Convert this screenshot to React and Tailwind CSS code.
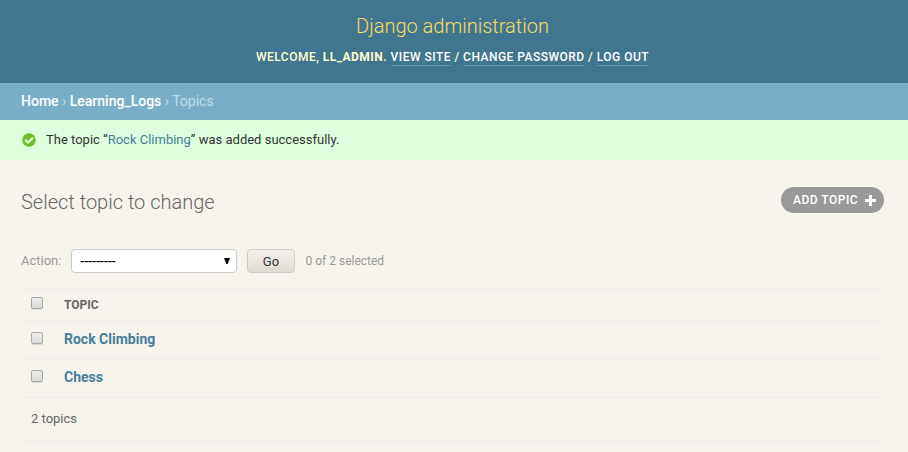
import React from 'react';

function HeaderLink({ children }) {
  return (
    <a href="#" className="border-b border-[#6795ab] pb-px text-white">
      {children}
    </a>
  );
}

function Checkbox() {
  return (
    <span
      role="checkbox"
      aria-checked="false"
      className="block h-3 w-3 rounded-[2px] border border-[#a9a9a9] bg-linear-to-b from-[#ececec] to-[#d9d9d9] shadow-[0_1px_0_#dddad4]"
    />
  );
}

function TopicRow({ name }) {
  return (
    <div className="flex h-[38px] items-start border-b border-[#eeeeee] pl-[10px]">
      <div className="w-[33px] pt-[10px]">
        <Checkbox />
      </div>
      <a href="#" className="pt-[8px] text-[14px] leading-[18px] font-bold text-[#447e9b]">
        {name}
      </a>
    </div>
  );
}

export default function App() {
  return (
    <div className="h-[452px] w-[908px] overflow-hidden bg-[#f7f4ed] font-['Roboto',sans-serif] text-[13px] text-[#333]">
      <header className="flex h-[83px] flex-col items-center bg-[#417690] pt-[14px]">
        <h1 className="-ml-[3px] text-[20px] leading-[24px] font-light text-[#f5dd5d]">Django administration</h1>
        <div className="mt-[11px] -ml-[3px] text-[12px] leading-[16px] font-medium tracking-[0.48px] whitespace-nowrap text-[#ffffcc]">
          WELCOME, <strong className="font-bold">LL_ADMIN</strong>. <HeaderLink>VIEW SITE</HeaderLink> /{' '}
          <HeaderLink>CHANGE PASSWORD</HeaderLink> / <HeaderLink>LOG OUT</HeaderLink>
        </div>
      </header>

      <nav className="h-[37px] bg-[#79aec8] pt-[9px] pl-[21px] text-[14px] leading-[18px] whitespace-nowrap text-[#c4dce8]">
        <a href="#" className="font-medium text-white">Home</a> ›{' '}
        <a href="#" className="font-medium text-white">Learning_Logs</a> › Topics
      </nav>

      <div className="flex h-10 items-center bg-[#ddffdd] pl-[22px]">
        <svg width="14" height="14" viewBox="0 0 14 14" fill="none" aria-hidden="true">
          <circle cx="7" cy="7" r="6.8" fill="#70bf2b" />
          <path d="M3.1 6.7 L6 9.4 L10.9 4.7" stroke="#ddffdd" strokeWidth="2.2" />
        </svg>
        <p className="ml-[10px] leading-[18px]">
          The topic “<a href="#" className="text-[#447e9b]">Rock Climbing</a>” was added successfully.
        </p>
      </div>

      <main className="pr-6 pl-[21px]">
        <div className="flex h-[89px] items-start justify-between pt-[27px]">
          <h2 className="pt-[3px] text-[20px] leading-[24px] font-light text-[#666]">Select topic to change</h2>
          <a
            href="#"
            className="flex h-[26px] w-[103px] items-center rounded-full bg-[#999] pl-3 text-[12px] leading-[16px] font-medium tracking-[0.5px] whitespace-nowrap text-white"
          >
            ADD TOPIC
            <svg className="ml-[7px]" width="11" height="11" viewBox="0 0 11 11" aria-hidden="true">
              <path d="M4 0h3v4h4v3H7v4H4V7H0V4h4z" fill="#fff" />
            </svg>
          </a>
        </div>

        <div className="flex h-[39px] items-start text-[#999]">
          <span className="w-[50px] pt-[3px] leading-[18px]">Action:</span>
          <div
            role="combobox"
            className="flex h-6 w-[166px] items-center justify-between rounded-[4px] border border-[#ccc] bg-white pr-[6px] pl-2 text-black"
          >
            <span className="font-['Liberation_Sans',Arial,sans-serif] text-[14px] leading-[16px] tracking-[-0.75px]">
              ---------
            </span>
            <svg width="6" height="6" viewBox="0 0 6 6" aria-hidden="true">
              <path d="M0 0h6L3.6 6H2.4z" fill="#000" />
            </svg>
          </div>
          <button className="ml-[10px] h-6 w-12 rounded-[4px] border border-[#ccc] bg-linear-to-b from-[#f2f0e9] to-[#dddbd3] pt-px leading-[21px] text-[#333]">
            Go
          </button>
          <span className="ml-[10.5px] pt-[3px] text-[12px] leading-[18px]">0 of 2 selected</span>
        </div>

        <div className="flex h-[34px] items-start border-y border-[#eeeeee] pl-[10px]">
          <div className="w-[33px] pt-[8px]">
            <Checkbox />
          </div>
          <span className="pt-[8px] text-[12px] leading-[16px] font-bold text-[#666]">TOPIC</span>
        </div>
        <TopicRow name="Rock Climbing" />
        <TopicRow name="Chess" />
        <p className="h-[43px] border-b border-[#eeeeee] pt-[12px] pl-[10px] leading-[18px] text-[#666]">2 topics</p>
      </main>
    </div>
  );
}
